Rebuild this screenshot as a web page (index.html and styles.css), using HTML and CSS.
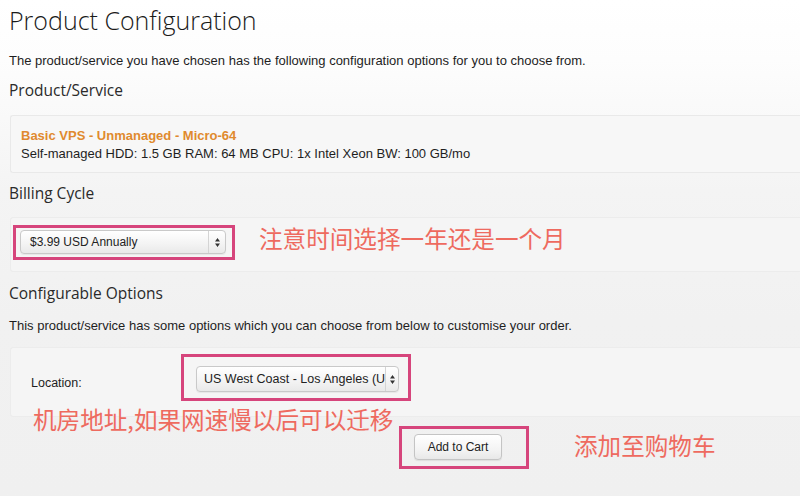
FILE: index.html
```html
<!DOCTYPE html>
<html lang="en">
<head>
<meta charset="utf-8">
<title>Product Configuration</title>
<link rel="stylesheet" href="styles.css">
</head>
<body>
<div class="page">
  <h1 class="title">Product Configuration</h1>
  <p class="intro">The product/service you have chosen has the following configuration options for you to choose from.</p>

  <h2 class="sub sub-product">Product/Service</h2>
  <div class="panel panel-product">
    <div class="prod-name">Basic VPS - Unmanaged - Micro-64</div>
    <div class="prod-desc">Self-managed HDD: 1.5 GB RAM: 64 MB CPU: 1x Intel Xeon BW: 100 GB/mo</div>
  </div>

  <h2 class="sub sub-billing">Billing Cycle</h2>
  <div class="panel panel-billing">
    <div class="mark mark-billing">
      <div class="select select-billing">
        <span class="select-text">$3.99 USD Annually</span>
        <span class="select-arrows">
          <svg width="7" height="11" viewBox="0 0 7 11"><path d="M3.5 1 L6 4.5 L1 4.5 Z M3.5 10 L6 6.5 L1 6.5 Z" fill="#333"/></svg>
        </span>
      </div>
    </div>
    <span class="note note-billing">注意时间选择一年还是一个月</span>
  </div>

  <h2 class="sub sub-config">Configurable Options</h2>
  <p class="intro intro-config">This product/service has some options which you can choose from below to customise your order.</p>
  <div class="panel panel-config">
    <span class="opt-label">Location:</span>
    <div class="mark mark-location">
      <div class="select select-location">
        <span class="select-text">US West Coast - Los Angeles (U</span>
        <span class="select-arrows">
          <svg width="7" height="11" viewBox="0 0 7 11"><path d="M3.5 1 L6 4.5 L1 4.5 Z M3.5 10 L6 6.5 L1 6.5 Z" fill="#333"/></svg>
        </span>
      </div>
    </div>
  </div>
  <div class="note note-location">机房地址,如果网速慢以后可以迁移</div>

  <div class="cart-row">
    <div class="mark mark-cart">
      <button class="btn" type="button">Add to Cart</button>
    </div>
    <span class="note note-cart">添加至购物车</span>
  </div>
</div>
</body>
</html>
```

FILE: styles.css
```css
html, body {
  margin: 0;
  padding: 0;
}
body {
  width: 800px;
  height: 496px;
  overflow: hidden;
  background: linear-gradient(#ffffff 0px, #fdfdfd 60px, #f4f4f4 190px, #f1f1f1 320px, #f0f0f0 496px);
  font-family: "Liberation Sans", Arial, sans-serif;
  color: #1e1e1e;
}
.page {
  padding-left: 9px;
}
.title {
  margin: 0;
  font-family: "Open Sans", sans-serif;
  font-weight: 300;
  font-size: 25px;
  line-height: 40px;
  color: #1a1a1a;
}
.intro {
  margin: 13px 0 0;
  font-size: 13px;
  line-height: 16px;
  color: #1e1e1e;
}
.sub {
  margin: 11px 0 0;
  font-family: "Open Sans", sans-serif;
  font-weight: 400;
  font-size: 15.5px;
  line-height: 20px;
  color: #2a2a2a;
}
.sub-billing { margin-top: 10px; }
.sub-config { margin-top: 11px; }
.intro-config { margin-top: 15px; }

.panel {
  margin-left: 1px;
  border: 1px solid #e9e9e9;
  border-right: none;
  border-radius: 3px 0 0 3px;
  background: #f7f7f7;
}
.panel-product {
  margin-top: 15px;
  padding: 11px 0 9px 10px;
  height: 36px;
  font-size: 13px;
  line-height: 18px;
}
.prod-name {
  font-weight: bold;
  color: #e08a2e;
}
.prod-desc {
  color: #1e1e1e;
}
.panel-billing {
  margin-top: 14px;
  display: flex;
  align-items: flex-start;
  padding: 7px 0 0 2px;
  box-sizing: border-box;
  height: 55px;
  background: #f5f5f5;
  border-color: #ececec;
}
.mark {
  border: 3px solid #d6457c;
  box-sizing: border-box;
}
.mark-billing {
  width: 222px;
  height: 35px;
  padding: 2px 6px 3px 4px;
}
.select {
  box-sizing: border-box;
  display: flex;
  align-items: center;
  border: 1px solid #c9c9c9;
  border-radius: 4px;
  background: linear-gradient(#ffffff, #f3f3f3 60%, #e9e9e9);
  box-shadow: 0 1px 1px rgba(0,0,0,0.06);
  font-size: 12px;
  color: #222;
  overflow: hidden;
}
.select-billing {
  width: 206px;
  height: 24px;
}
.select-text {
  flex: 1;
  padding-left: 9px;
  white-space: nowrap;
}
.select-arrows {
  width: 16px;
  height: 100%;
  border-left: 1px solid #d4d4d4;
  display: flex;
  align-items: center;
  justify-content: center;
}
.note {
  font-family: "Noto Sans CJK SC", sans-serif;
  font-weight: 400;
  font-size: 23.6px;
  line-height: 30px;
  color: #ee6a5f;
}
.note-billing {
  margin-left: 24px;
  margin-top: -2px;
}

.panel-config {
  margin-top: 13px;
  display: flex;
  align-items: flex-start;
  box-sizing: border-box;
  height: 70px;
  padding: 6px 0 0 20px;
  background: #f5f5f5;
  border-color: #ececec;
}
.opt-label {
  width: 150px;
  font-size: 12.5px;
  padding-top: 22px;
  color: #1e1e1e;
}
.mark-location {
  width: 230px;
  height: 47px;
  padding: 9px 9px 5px 12px;
}
.select-location {
  width: 203px;
  height: 26px;
  font-size: 12.5px;
}
.select-location .select-text {
  padding-left: 7px;
}
.note-location {
  margin: -13px 0 0 24px;
  position: relative;
}
.cart-row {
  margin-top: -8px;
  padding-left: 390px;
  display: flex;
  align-items: flex-start;
}
.mark-cart {
  width: 130px;
  height: 43px;
  padding: 5px 0 0 12px;
}
.btn {
  width: 88px;
  height: 26px;
  padding: 0;
  border: 1px solid #c4c4c4;
  border-radius: 4px;
  background: linear-gradient(#ffffff, #f4f4f4 60%, #e8e8e8);
  box-shadow: 0 1px 1px rgba(0,0,0,0.08);
  font-family: "Liberation Sans", Arial, sans-serif;
  font-size: 12px;
  color: #222;
}
.note-cart {
  margin: 4px 0 0 45px;
}
```
